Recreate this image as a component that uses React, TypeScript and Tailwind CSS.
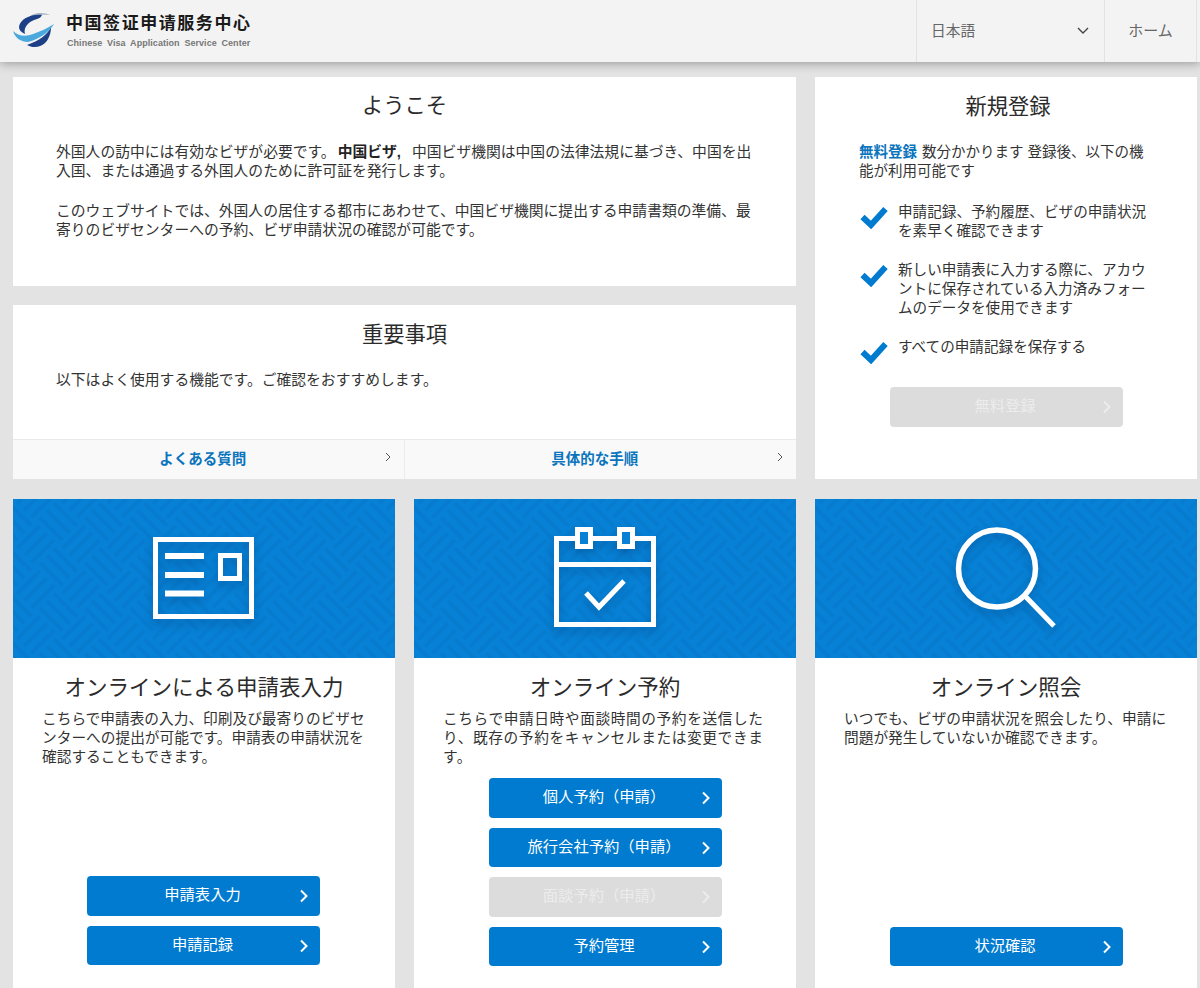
const FONT = "font-['Liberation_Sans','Noto_Sans_CJK_JP',sans-serif]";

function Chevron({ className = "" }: { className?: string }) {
  return (
    <svg width="10" height="14" viewBox="0 0 10 14" fill="none" className={className}>
      <path d="M2 1.5 L7.5 7 L2 12.5" stroke="currentColor" strokeWidth="2" />
    </svg>
  );
}

function Btn({ label, disabled }: { label: string; disabled?: boolean }) {
  return (
    <div
      className={`relative flex h-[39.5px] w-[233px] items-center justify-center rounded-[4px] text-[15.3px] ${
        disabled ? "bg-[#dcdcdc] text-[#ececec]" : "bg-[#007bcf] text-white"
      }`}
    >
      <span className="-ml-[2px]">{label}</span>
      <Chevron className="absolute right-[11px] top-[13px]" />
    </div>
  );
}

function Check() {
  return (
    <svg width="28" height="24" viewBox="0 0 28 24" fill="none" className="mt-[2px] shrink-0">
      <path d="M2.5 12 L11 20 L25.5 4" stroke="#007bcf" strokeWidth="6" />
    </svg>
  );
}

function Banner({ children, id }: { children: React.ReactNode; id: string }) {
  return (
    <svg viewBox="0 0 382 159" width="382" height="159" className="block shrink-0">
      <defs>
        <pattern id={id} width="64" height="64" patternUnits="userSpaceOnUse" patternTransform="rotate(45)">
          <rect width="64" height="64" fill="#0781d6" />
          <g stroke="#0675c6" strokeWidth="4" strokeOpacity="0.42">
            <path d="M0 6H32M0 16H32M0 26H32" />
            <path d="M38 0V32M48 0V32M58 0V32" />
            <path d="M6 32V64M16 32V64M26 32V64" />
            <path d="M32 38H64M32 48H64M32 58H64" />
          </g>
        </pattern>
      </defs>
      <rect width="382" height="159" fill={`url(#${id})`} />
      <g className="drop-shadow-[0_5px_5px_rgba(0,40,90,0.3)]" fill="none" stroke="#fff" strokeWidth="5">
        {children}
      </g>
    </svg>
  );
}

function Card({
  id,
  icon,
  title,
  text,
  buttons,
  btnClass = "mb-[43px]",
  textClass = "",
}: {
  id: string;
  icon: React.ReactNode;
  title: string;
  text: React.ReactNode;
  buttons: { label: string; disabled?: boolean }[];
  btnClass?: string;
  textClass?: string;
}) {
  return (
    <section className="flex h-[510px] flex-col bg-white">
      <Banner id={id}>{icon}</Banner>
      <h2 className="mt-[15px] text-center text-[21.5px] leading-[30px] text-[#2b2b2b]">{title}</h2>
      <p className={`mt-[7px] whitespace-nowrap px-[29px] text-[14.7px] leading-[19px] text-[#333] ${textClass}`}>{text}</p>
      <div className={`mt-auto flex flex-col items-center gap-[10px] ${btnClass}`}>
        {buttons.map((b) => (
          <Btn key={b.label} {...b} />
        ))}
      </div>
    </section>
  );
}

export default function App() {
  return (
    <div className={`h-[988px] w-[1200px] overflow-hidden bg-[#e3e3e3] ${FONT}`}>
      <header className="relative flex h-[62px] bg-[#f3f3f3] pr-[3px] shadow-[0_2px_9px_rgba(0,0,0,0.3)]">
        <div className="flex flex-1 items-start pl-[13px] pt-[12px]">
          <svg width="44" height="37" viewBox="0 0 44 37" className="shrink-0">
            <path d="M15 10 C20 4 28 2 37 3 C30 0 20 0 14 7Z" fill="#a9b4c6" />
            <path d="M29 3 C18 2 7 7 6 15 C6 18 8 20 12 22 C10 15 16 9 24 7 C27 6 28 5 29 3Z" fill="#1c3f86" />
            <path d="M38 15 C35 22 26 29 14 33 C19 36 27 36 32 31 C36 27 38 21 38 15Z" fill="#1c3f86" />
            <path d="M0 19 C5 24 12 25 20 22 C28 19 35 16 41 12 C36 20 27 27 15 30 C8 30 2 26 0 19Z" fill="#4ba8dc" />
          </svg>
          <div className="ml-[9px]">
            <div className="mt-[1px] whitespace-nowrap text-[17px] font-bold leading-[22px] tracking-[1.55px] text-[#1a1a1a]">
              中国签证申请服务中心
            </div>
            <div className="mt-[2px] whitespace-nowrap pl-[1px] text-[9px] font-bold leading-[12px] tracking-[0.05px] text-[#777] [word-spacing:2.2px]">
              Chinese Visa Application Service Center
            </div>
          </div>
        </div>
        <div className="flex w-[188px] items-center justify-between border-l border-[#e2e2e2] pl-[14px] pr-[15px] text-[14.7px] text-[#666]">
          <span>日本語</span>
          <svg width="12" height="8" viewBox="0 0 12 8" fill="none">
            <path d="M1 1 L6 6 L11 1" stroke="#444" strokeWidth="1.4" />
          </svg>
        </div>
        <div className="flex w-[93px] items-center justify-center border-x border-[#e2e2e2] text-[15px] text-[#666]">
          ホーム
        </div>
      </header>

      <main className="pl-[13px] pt-[15px]">
        <div className="grid grid-cols-[783px_382px] gap-x-[19px]">
          <div className="flex flex-col gap-[19px]">
            <section className="h-[209px] bg-white px-[43px]">
              <h2 className="pt-[14px] text-center text-[21.3px] leading-[30px] text-[#2b2b2b]">ようこそ</h2>
              <div className="mt-[22px] text-[14.8px] leading-[19px] text-[#333]">
                <p className="whitespace-nowrap">
                  外国人の訪中には有効なビザが必要です。
                  <b className="pl-[2px] pr-[11px] text-[#222]">中国ビザ,</b>
                  中国ビザ機関は中国の法律法規に基づき、中国を出
                  <br />
                  入国、または通過する外国人のために許可証を発行します。
                </p>
                <p className="mt-[21px] whitespace-nowrap">
                  このウェブサイトでは、外国人の居住する都市にあわせて、中国ビザ機関に提出する申請書類の準備、最
                  <br />
                  寄りのビザセンターへの予約、ビザ申請状況の確認が可能です。
                </p>
              </div>
            </section>
            <section className="flex h-[174px] flex-col bg-white">
              <h2 className="pt-[15px] text-center text-[21.3px] leading-[30px] text-[#2b2b2b]">重要事項</h2>
              <p className="mt-[21px] px-[43px] text-[14.8px] leading-[19px] text-[#333]">
                以下はよく使用する機能です。ご確認をおすすめします。
              </p>
              <div className="mt-auto grid h-[40px] grid-cols-2 border-t border-[#e9e9e9] bg-[#f9f9f9] text-[14.5px] font-bold text-[#0a74bd]">
                {["よくある質問", "具体的な手順"].map((t, i) => (
                  <div
                    key={t}
                    className={`relative flex items-center justify-center pr-[11px] ${i === 0 ? "border-r border-[#ececec]" : ""}`}
                  >
                    {t}
                    <svg width="6" height="10" viewBox="0 0 6 10" fill="none" className="absolute right-[13px] top-[12px]">
                      <path d="M1 1 L5 5 L1 9" stroke="#555" strokeWidth="1" />
                    </svg>
                  </div>
                ))}
              </div>
            </section>
          </div>

          <section className="h-[402px] bg-white pl-[44px] pr-[30px]">
            <h2 className="pt-[15px] pr-[10px] text-center text-[21.3px] leading-[30px] text-[#2b2b2b]">新規登録</h2>
            <p className="mt-[21px] whitespace-nowrap text-[14.5px] leading-[19px] text-[#333]">
              <b className="mr-[5px] text-[#0a74bd]">無料登録</b>数分かかります 登録後、以下の機
              <br />
              能が利用可能です
            </p>
            <ul className="ml-[1px] mt-[22px] flex flex-col gap-[20px] whitespace-nowrap text-[14.6px] leading-[19px] text-[#333]">
              <li className="flex gap-[10px]">
                <Check />
                <span>
                  申請記録、予約履歴、ビザの申請状況
                  <br />
                  を素早く確認できます
                </span>
              </li>
              <li className="flex gap-[10px]">
                <Check />
                <span>
                  新しい申請表に入力する際に、アカウ
                  <br />
                  ントに保存されている入力済みフォー
                  <br />
                  ムのデータを使用できます
                </span>
              </li>
              <li className="flex gap-[10px]">
                <Check />
                <span>すべての申請記録を保存する</span>
              </li>
            </ul>
            <div className="mt-[23px] flex justify-center pr-[14px]">
              <Btn label="無料登録" disabled />
            </div>
          </section>
        </div>

        <div className="mt-[20px] grid grid-cols-[382px_382px_382px] gap-x-[19px]">
          <Card
            id="p1"
            title="オンラインによる申請表入力"
            btnClass="mb-[44px] pr-[1px]"
            text={
              <>
                こちらで申請表の入力、印刷及び最寄りのビザセ
                <br />
                ンターへの提出が可能です。申請表の申請状況を
                <br />
                確認することもできます。
              </>
            }
            icon={
              <>
                <rect x="142.5" y="40.5" width="96" height="77" />
                <path strokeWidth="6" d="M152 57H191M152 76H191M152 94.5H191" />
                <rect x="207.5" y="56.5" width="19" height="23" />
              </>
            }
            buttons={[{ label: "申請表入力" }, { label: "申請記録" }]}
          />
          <Card
            id="p2"
            title="オンライン予約"
            textClass="tracking-[0.6px]"
            text={
              <>
                こちらで申請日時や面談時間の予約を送信した
                <br />
                り、既存の予約をキャンセルまたは変更できま
                <br />
                す。
              </>
            }
            icon={
              <>
                <rect x="142.5" y="39.5" width="97" height="86" />
                <path d="M142 65.5H240" />
                <rect x="163.5" y="30.5" width="13" height="17" fill="#0781d6" />
                <rect x="205.5" y="30.5" width="13" height="17" fill="#0781d6" />
                <path d="M172 94 L185 108 L210 82" />
              </>
            }
            buttons={[
              { label: "個人予約（申請）" },
              { label: "旅行会社予約（申請）" },
              { label: "面談予約（申請）", disabled: true },
              { label: "予約管理" },
            ]}
          />
          <Card
            id="p3"
            title="オンライン照会"
            text={
              <>
                いつでも、ビザの申請状況を照会したり、申請に
                <br />
                問題が発生していないか確認できます。
              </>
            }
            icon={
              <>
                <circle cx="182" cy="69.5" r="38.5" strokeWidth="5.5" />
                <path d="M211 98 L239 127" />
              </>
            }
            buttons={[{ label: "状況確認" }]}
          />
        </div>
      </main>
    </div>
  );
}
